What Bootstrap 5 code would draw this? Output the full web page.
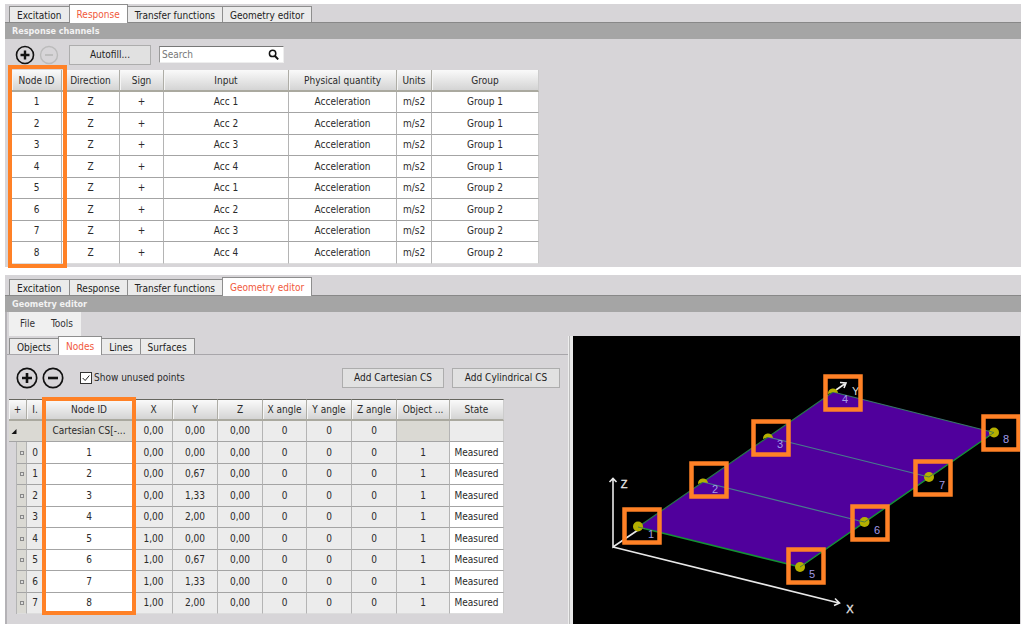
<!DOCTYPE html>
<html lang="en">
<head>
<meta charset="utf-8">
<meta name="viewport" content="width=device-width, initial-scale=1">
<title>Modal test setup</title>
<link href="https://cdn.jsdelivr.net/npm/bootstrap@5.3.0/dist/css/bootstrap.min.css" rel="stylesheet">
<style>
body{font-family:"DejaVu Sans Condensed","DejaVu Sans",sans-serif;font-size:10px;line-height:14px;color:#2a2a2a;background:#fff}
.page-stack{padding:4px 3px 3px 5px;gap:8px}
.panel{background:#d7d5d8}
.channel-panel{padding-bottom:3px}
.tab-strip{border-bottom:1px solid #888;padding-left:4px;height:19px}
.editor-panel>.tab-strip{height:21px}
.tab-strip.sub-tabs{height:19px;border-color:#a8a6aa}
.tab-strip .nav-link{padding:1px 7px 0;height:16px;color:#222;background:#ebebeb;border:1px solid #8e8e8e;border-bottom:0;border-radius:0;margin-right:-1px;line-height:15px}
.tab-strip .nav-link.active{height:19px;padding:2px 7px 0;background:#fff;color:#f1593c;margin-bottom:-1px;position:relative}
.title-bar{background:#a5a5a5;color:#f2f2f2;font-size:9px;line-height:16px;font-weight:700;padding-left:7px;margin:0}
.tool-row{height:31px;padding-left:10px}
.icon-btn{border:0;background:none;padding:0;line-height:0}
.flat-btn{font-size:10px;line-height:14px;padding:2px 0;border:1px solid #adadad;border-radius:0;background:#e1e1e1;color:#222}
.flat-btn:hover{background:#e8f0f8}
.autofill{margin-left:10px;width:82px}
.add-cs{width:102px}
.add-cyl{width:108px}
.search-group{width:125px;height:17px;background:#fff;border:1px solid #eee;border-top-color:#777;border-left-color:#999}
.search-group input{font-size:10px;line-height:14px;padding:0 2px;border:0;width:100px;background:none;outline:0}
.search-group input::placeholder{color:#777;opacity:1}
.grid-wrap{position:relative;width:max-content}
.channel-wrap{margin-left:7px}
.node-wrap{margin-left:2px}
.data-grid{table-layout:fixed;border-collapse:separate;border-spacing:0;margin:0;text-align:center;background:#fff}
.data-grid th{height:22px;padding:0;font-weight:400;background:linear-gradient(#fafafa,#d4d4d4);border-right:1px solid #aeada6;border-bottom:2px solid #aaa99f;white-space:nowrap;box-shadow:inset 1px 0 #f5f5f5}
.data-grid td{height:21px;padding:0;border-right:1px solid #b4b4b4;border-bottom:1px solid #a4a4a4;white-space:nowrap;overflow:hidden}
.data-grid tbody tr:nth-child(even) td{height:22px}
.data-grid tbody tr:last-child td{border-bottom-color:#ddd}
.data-grid tr>:last-child{border-right-color:#ccc}
.channels{width:527px}
.channels th{padding-top:1px}
.nodes{width:495px}
.nodes th{border-top:1px solid #66665f}
.nodes td{background:#ececec}
.nodes td.id-cell,.nodes td.state-cell{background:#fff}
.nodes td.shade{background:#dad9d3}
.nodes td.gutter{background:#d7d5d8;border-bottom:0}
.nodes .cs-row td.first{text-align:left;padding-left:2px;border-right:0}
.dot{display:block;width:4px;height:4px;border:1px solid #888;background:#ddd;margin:0 auto}
.mark-ring{position:absolute;border:4px solid #ff8126;pointer-events:none}
.ring-channels{left:-4px;top:-5px;bottom:-4px;width:59px}
.ring-nodes{left:33px;top:-2px;bottom:-1px;width:94px}
.menu-bar{width:max-content;margin-left:2px;height:24px;background:#f0f0f0;gap:16px;padding:0 8px 0 11px}
.menu-bar a{color:#333;text-decoration:none}
.editor-split{display:grid;grid-template-columns:minmax(561px,55%) 5px minmax(0,1fr);padding-right:1px}
.divider{border-left:1px solid #eee;border-right:3px solid #e8e8e8;background:#bbb}
.editor-body{border-left:2px solid #b4b2b6}
.editor-body .tab-strip{padding-left:2px}
.node-tools{height:44px;padding:2px 8px 0 9px}
.node-tools .form-check-input{width:12px;height:12px;margin:0;border:1px solid #333;border-radius:0;background-color:#fff}
.node-tools .form-check-input:checked{background-image:url("data:image/svg+xml,%3csvg xmlns='http://www.w3.org/2000/svg' viewBox='0 0 12 12'%3e%3cpath fill='none' stroke='%23222' stroke-width='1.2' d='M2 6l3 3 5-6'/%3e%3c/svg%3e")}
.node-tools label{padding-left:2px}
.viewer{background:#000}
.viewer svg{display:block;width:100%;height:auto}
</style>
<script src="https://cdn.jsdelivr.net/npm/bootstrap@5.3.0/dist/js/bootstrap.bundle.min.js" defer></script>
</head>
<body>
<main class="page-stack d-flex flex-column">
<section class="panel channel-panel">
  <nav class="nav tab-strip align-items-end flex-nowrap" aria-label="Setup">
    <a class="nav-link" href="#">Excitation</a><a class="nav-link active" href="#">Response</a><a class="nav-link" href="#">Transfer functions</a><a class="nav-link" href="#">Geometry editor</a>
  </nav>
  <h2 class="title-bar">Response channels</h2>
  <div class="tool-row d-flex align-items-center">
    <button class="icon-btn" type="button" aria-label="Add channel"><svg width="20" height="20" viewBox="0 0 20 20" fill="none" stroke="#111"><circle cx="10" cy="10" r="8.5" stroke-width="1.6"/><path d="M5.5 10h9M10 5.5v9" stroke-width="2.4"/></svg></button>
    <button class="icon-btn ms-1" type="button" aria-label="Remove channel" disabled><svg width="20" height="20" viewBox="0 0 20 20" fill="none" stroke="#bbb"><circle cx="10" cy="10" r="8.5" stroke-width="1.4"/><path d="M6 10h8" stroke-width="1.8"/></svg></button>
    <button class="btn flat-btn autofill" type="button">Autofill...</button>
    <div class="search-group d-flex align-items-center justify-content-between ms-2 pe-1">
      <input type="search" placeholder="Search" aria-label="Search">
      <button class="icon-btn" type="button" aria-label="Find"><svg width="11" height="11" viewBox="0 0 11 11" fill="none" stroke="#111"><circle cx="4.6" cy="4.4" r="3.2" stroke-width="1.5"/><path d="M7 7l3.2 3.4" stroke-width="1.9"/></svg></button>
    </div>
  </div>
  <div class="grid-wrap channel-wrap">
    <table class="data-grid channels">
      <colgroup><col style="width:50px"><col style="width:58px"><col style="width:44px"><col style="width:125px"><col style="width:108px"><col style="width:35px"><col style="width:107px"></colgroup>
      <thead><tr><th>Node ID</th><th>Direction</th><th>Sign</th><th>Input</th><th>Physical quantity</th><th>Units</th><th>Group</th></tr></thead>
      <tbody>
        <tr><td>1</td><td>Z</td><td>+</td><td>Acc 1</td><td>Acceleration</td><td>m/s2</td><td>Group 1</td></tr>
        <tr><td>2</td><td>Z</td><td>+</td><td>Acc 2</td><td>Acceleration</td><td>m/s2</td><td>Group 1</td></tr>
        <tr><td>3</td><td>Z</td><td>+</td><td>Acc 3</td><td>Acceleration</td><td>m/s2</td><td>Group 1</td></tr>
        <tr><td>4</td><td>Z</td><td>+</td><td>Acc 4</td><td>Acceleration</td><td>m/s2</td><td>Group 1</td></tr>
        <tr><td>5</td><td>Z</td><td>+</td><td>Acc 1</td><td>Acceleration</td><td>m/s2</td><td>Group 2</td></tr>
        <tr><td>6</td><td>Z</td><td>+</td><td>Acc 2</td><td>Acceleration</td><td>m/s2</td><td>Group 2</td></tr>
        <tr><td>7</td><td>Z</td><td>+</td><td>Acc 3</td><td>Acceleration</td><td>m/s2</td><td>Group 2</td></tr>
        <tr><td>8</td><td>Z</td><td>+</td><td>Acc 4</td><td>Acceleration</td><td>m/s2</td><td>Group 2</td></tr>
      </tbody>
    </table>
    <div class="mark-ring ring-channels"></div>
  </div>
</section>

<section class="panel editor-panel">
  <nav class="nav tab-strip align-items-end flex-nowrap" aria-label="Setup">
    <a class="nav-link" href="#">Excitation</a><a class="nav-link" href="#">Response</a><a class="nav-link" href="#">Transfer functions</a><a class="nav-link active" href="#">Geometry editor</a>
  </nav>
  <h2 class="title-bar">Geometry editor</h2>
  <div class="editor-body">
    <nav class="menu-bar d-flex align-items-center" aria-label="Menu"><a href="#">File</a><a href="#">Tools</a></nav>
    <div class="editor-split">
      <div>
        <nav class="nav tab-strip sub-tabs align-items-end flex-nowrap" aria-label="Geometry">
          <a class="nav-link" href="#">Objects</a><a class="nav-link active" href="#">Nodes</a><a class="nav-link" href="#">Lines</a><a class="nav-link" href="#">Surfaces</a>
        </nav>
        <div class="node-tools d-flex align-items-center">
          <button class="icon-btn" type="button" aria-label="Add node"><svg width="22" height="22" viewBox="0 0 22 22" fill="none" stroke="#111"><circle cx="11" cy="11" r="9.7" stroke-width="1.7"/><path d="M6 11h10M11 6v10" stroke-width="2.6"/></svg></button>
          <button class="icon-btn ms-1" type="button" aria-label="Remove node"><svg width="22" height="22" viewBox="0 0 22 22" fill="none" stroke="#111"><circle cx="11" cy="11" r="9.7" stroke-width="1.7"/><path d="M6 11h10" stroke-width="2.6"/></svg></button>
          <div class="d-flex align-items-center ms-3"><input class="form-check-input" type="checkbox" id="unused" checked><label for="unused">Show unused points</label></div>
          <button class="btn flat-btn add-cs ms-auto" type="button">Add Cartesian CS</button>
          <button class="btn flat-btn add-cyl ms-2" type="button">Add Cylindrical CS</button>
        </div>
        <div class="grid-wrap node-wrap">
          <table class="data-grid nodes">
            <colgroup><col style="width:8px"><col style="width:10px"><col style="width:17px"><col style="width:91px"><col style="width:38px"><col style="width:45px"><col style="width:45px"><col style="width:44px"><col style="width:45px"><col style="width:45px"><col style="width:53px"><col style="width:54px"></colgroup>
            <thead><tr><th colspan="2">+</th><th>I.</th><th>Node ID</th><th>X</th><th>Y</th><th>Z</th><th>X angle</th><th>Y angle</th><th>Z angle</th><th>Object ...</th><th>State</th></tr></thead>
            <tbody>
              <tr class="cs-row"><td class="shade first" colspan="3"><svg width="7" height="7" viewBox="0 0 7 7"><path d="M5.5 1v5H.5z" fill="#111"/></svg></td><td class="shade">Cartesian CS[-...</td><td>0,00</td><td>0,00</td><td>0,00</td><td>0</td><td>0</td><td>0</td><td class="shade"></td><td></td></tr>
              <tr><td class="gutter"></td><td class="shade"><span class="dot"></span></td><td>0</td><td class="id-cell">1</td><td>0,00</td><td>0,00</td><td>0,00</td><td>0</td><td>0</td><td>0</td><td>1</td><td class="state-cell">Measured</td></tr>
              <tr><td class="gutter"></td><td class="shade"><span class="dot"></span></td><td>1</td><td class="id-cell">2</td><td>0,00</td><td>0,67</td><td>0,00</td><td>0</td><td>0</td><td>0</td><td>1</td><td class="state-cell">Measured</td></tr>
              <tr><td class="gutter"></td><td class="shade"><span class="dot"></span></td><td>2</td><td class="id-cell">3</td><td>0,00</td><td>1,33</td><td>0,00</td><td>0</td><td>0</td><td>0</td><td>1</td><td class="state-cell">Measured</td></tr>
              <tr><td class="gutter"></td><td class="shade"><span class="dot"></span></td><td>3</td><td class="id-cell">4</td><td>0,00</td><td>2,00</td><td>0,00</td><td>0</td><td>0</td><td>0</td><td>1</td><td class="state-cell">Measured</td></tr>
              <tr><td class="gutter"></td><td class="shade"><span class="dot"></span></td><td>4</td><td class="id-cell">5</td><td>1,00</td><td>0,00</td><td>0,00</td><td>0</td><td>0</td><td>0</td><td>1</td><td class="state-cell">Measured</td></tr>
              <tr><td class="gutter"></td><td class="shade"><span class="dot"></span></td><td>5</td><td class="id-cell">6</td><td>1,00</td><td>0,67</td><td>0,00</td><td>0</td><td>0</td><td>0</td><td>1</td><td class="state-cell">Measured</td></tr>
              <tr><td class="gutter"></td><td class="shade"><span class="dot"></span></td><td>6</td><td class="id-cell">7</td><td>1,00</td><td>1,33</td><td>0,00</td><td>0</td><td>0</td><td>0</td><td>1</td><td class="state-cell">Measured</td></tr>
              <tr><td class="gutter"></td><td class="shade"><span class="dot"></span></td><td>7</td><td class="id-cell">8</td><td>1,00</td><td>2,00</td><td>0,00</td><td>0</td><td>0</td><td>0</td><td>1</td><td class="state-cell">Measured</td></tr>
            </tbody>
          </table>
          <div class="mark-ring ring-nodes"></div>
        </div>
      </div>
      <div class="divider"></div>
      <div class="viewer">
        <svg viewBox="0 0 447 288" role="img" aria-label="Plate geometry with eight nodes" font-family="Liberation Sans, Arial, sans-serif">
          <!-- axes -->
          <g fill="none" stroke="#e8e8e8" stroke-width="1.6">
            <path d="M40 143V211L65 194M40 211L266 267M36.500 146l3.500-3.500 3.500 3.500M262 262.500l4.500 4.500-5.500 2.500"/>
          </g>
          <!-- plate -->
          <path d="M65 191L260 56 421 96.500 227 231z" fill="#50009c"/>
          <g fill="none" stroke="#2c8a4a" stroke-width="1.2">
            <path d="M65 191L260 56" stroke="#26754a"/><path d="M260 56L421 96.500" stroke="#387568"/>
            <path d="M65 191L227 231 421 96.500" stroke="#159136" stroke-width="1.5"/>
            <path d="M130 146L291 186M195 101L356 141" stroke="#477c8c"/>
          </g>
          <path d="M263 54l10-7M267 46.500l6 .5-2 5" fill="none" stroke="#eee" stroke-width="1.6"/>
          <text x="279" y="59" fill="#ddd" font-size="11">Y</text>
          <!-- nodes -->
          <g fill="#b5b000">
            <circle cx="65" cy="190.500" r="5"/><circle cx="227" cy="231" r="5"/><circle cx="291.500" cy="186" r="5"/><circle cx="356" cy="141" r="5"/><circle cx="421" cy="96.500" r="5"/>
            <path d="M125 148a5 5 0 1 1 10-1l-5-1zM190 103a5 5 0 1 1 10-1l-5-1zM255 58a5 5 0 1 1 10-1l-5-1z"/>
          </g>
          <path d="M65 191l7 1.700M227 231l6-4M285 184.500l6.500 1.500 6-4M350 139.500l6 1.500 6-4M415 95l6 1.500-6 4" fill="none" stroke="#4f7d40"/>
          <g fill="none" stroke="#ff8126" stroke-width="4.500">
            <rect x="51.500" y="173.500" width="35" height="33"/><rect x="118.500" y="127.500" width="35" height="33"/><rect x="180.500" y="85.500" width="35" height="33"/><rect x="252.500" y="40.500" width="35" height="33"/><rect x="215.500" y="213.500" width="35" height="33"/><rect x="279.500" y="170.500" width="35" height="33"/><rect x="342.500" y="125.500" width="35" height="33"/><rect x="410.500" y="80.500" width="35" height="33"/>
          </g>
          <g fill="#a29be8" font-size="11" text-anchor="middle">
            <text x="78" y="202">1</text><text x="142" y="157">2</text><text x="207" y="112">3</text><text x="272" y="67">4</text><text x="239" y="242">5</text><text x="304" y="198">6</text><text x="369" y="153">7</text><text x="433" y="107">8</text>
          </g>
          <g fill="#e8e8e8" stroke="#e8e8e8" stroke-width=".3" font-size="11" text-anchor="middle"><text x="51" y="152">Z</text><text x="277" y="277">X</text></g>
        </svg>
      </div>
    </div>
  </div>
</section>
</main>
</body>
</html>
